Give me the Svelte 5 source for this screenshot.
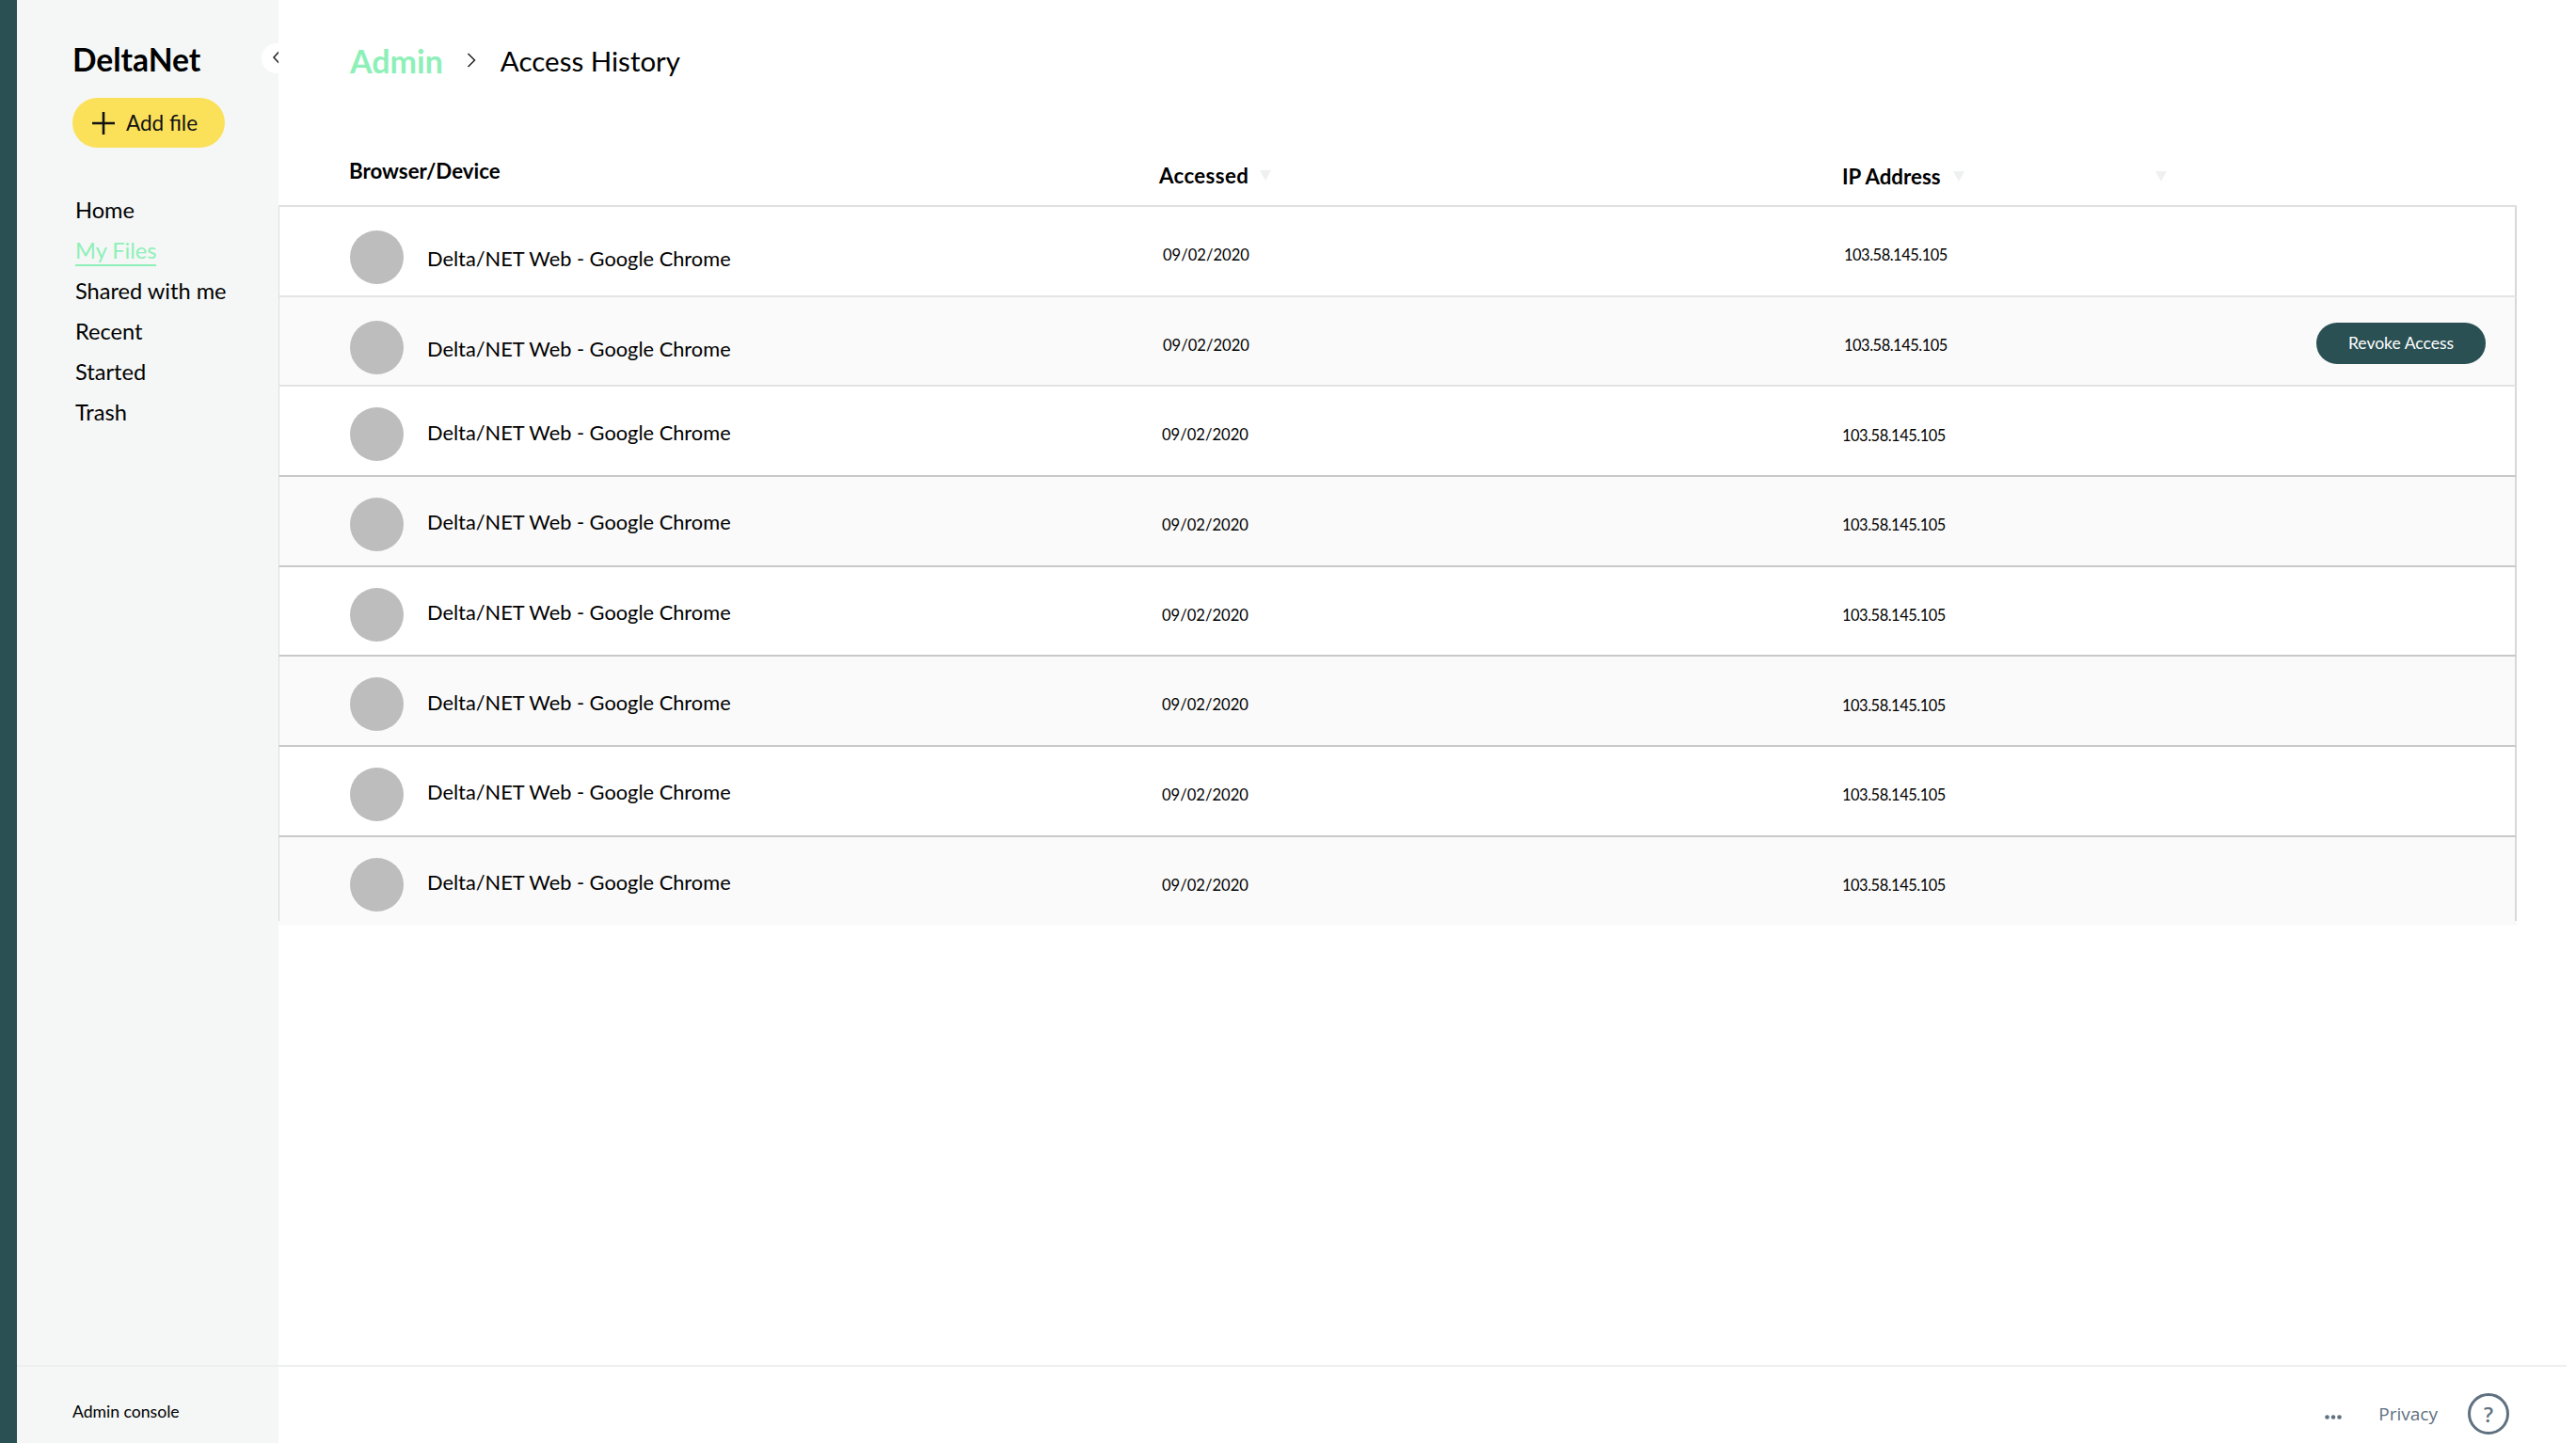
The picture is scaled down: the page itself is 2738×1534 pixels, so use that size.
<script>
  const nav = ['Home', 'My Files', 'Shared with me', 'Recent', 'Started', 'Trash'];
  const rows = Array.from({ length: 8 }, (_, i) => ({
    name: 'Delta/NET Web - Google Chrome',
    accessed: '09/02/2020',
    ip: '103.58.145.105',
    lead: i < 2,
    alt: i % 2 === 1,
    revoke: i === 1
  }));
</script>

<div class="app">
  <div class="rail"></div>

  <aside class="sidebar">
    <div class="sidebar-top">
      <button class="collapse" aria-label="Collapse">
        <svg width="10" height="16" viewBox="0 0 10 16"><path d="M8 1.5 2 8l6 6.5" fill="none" stroke="#222" stroke-width="1.5" /></svg>
      </button>
      <div class="brand">DeltaNet</div>
      <button class="add">
        <svg width="26" height="26" viewBox="0 0 26 26"><path d="M13 1v24M1 13h24" stroke="#111" stroke-width="2.6" /></svg>
        Add file
      </button>
      <nav>
        {#each nav as item}
          <div class="nav-item"><a class:active={item === 'My Files'} href="#/">{item}</a></div>
        {/each}
      </nav>
    </div>
    <div class="sidebar-foot">Admin console</div>
  </aside>

  <main>
    <div class="content">
      <header class="crumbs">
        <span class="crumb-root">Admin</span>
        <svg width="12" height="18" viewBox="0 0 12 18"><path d="M2.5 2 9.5 9l-7 7" fill="none" stroke="#222" stroke-width="1.5" /></svg>
        <span class="crumb-page">Access History</span>
      </header>

      <div class="table">
        <div class="head">
          <div class="th th-device">Browser/Device</div>
          <div class="th th-accessed">Accessed<i class="sort"></i></div>
          <div class="th th-ip">IP Address<i class="sort"></i><i class="sort last"></i></div>
        </div>
        {#each rows as row}
          <div class="row" class:lead={row.lead} class:alt={row.alt}>
            <div class="device">
              <span class="avatar"></span>
              <span class="name">{row.name}</span>
            </div>
            <div class="date">{row.accessed}</div>
            <div class="ip">{row.ip}</div>
            <div class="actions">
              {#if row.revoke}<button class="revoke">Revoke Access</button>{/if}
            </div>
          </div>
        {/each}
      </div>
    </div>

    <footer>
      <svg class="dots" width="18" height="5" viewBox="0 0 18 5" fill="#5f7080"><circle cx="2.5" cy="2.5" r="2.3" /><circle cx="9" cy="2.5" r="2.3" /><circle cx="15.5" cy="2.5" r="2.3" /></svg>
      <span class="privacy">Privacy</span>
      <span class="help">?</span>
    </footer>
  </main>
</div>

<style>
  :global(body) {
    margin: 0;
    background: #fff;
  }

  .app {
    display: flex;
    width: 2738px;
    height: 1534px;
    overflow: hidden;
    color: #000;
    font-family: Lato, 'Liberation Sans', sans-serif;
  }

  .rail {
    flex: 0 0 18px;
    background: #2a5053;
  }

  .sidebar {
    flex: 0 0 278px;
    display: flex;
    flex-direction: column;
    background: #f5f7f6;
  }

  .sidebar-top {
    flex: 1;
    position: relative;
    padding: 41px 0 0 59px;
  }

  .collapse {
    position: absolute;
    top: 46px;
    left: 260px;
    width: 32px;
    height: 32px;
    padding: 0 0 2px 2px;
    border: 0;
    border-radius: 50%;
    background: #fff;
    clip-path: inset(0 14px 0 0);
    display: flex;
    align-items: center;
    justify-content: center;
  }

  .collapse svg {
    margin-right: 2px;
  }

  .brand {
    font-size: 33.6px;
    line-height: 44px;
    font-weight: 700;
  }

  .add {
    display: flex;
    align-items: center;
    gap: 11px;
    width: 162px;
    height: 53px;
    margin-top: 19px;
    padding: 0 0 0 20px;
    border: 0;
    border-radius: 27px;
    background: #fbe15a;
    color: #111;
    font: inherit;
    font-size: 22.5px;
    white-space: nowrap;
  }

  nav {
    margin-top: 45px;
    padding-left: 3px;
  }

  .nav-item {
    height: 43px;
    line-height: 43px;
    font-size: 23.6px;
  }

  .nav-item a {
    color: inherit;
    text-decoration: none;
  }

  .nav-item a.active {
    color: #8ef0b8;
    border-bottom: 2px solid #8ef0b8;
    padding-bottom: 1px;
  }

  .sidebar-foot {
    height: 83px;
    box-sizing: border-box;
    border-top: 2px solid #eef0ef;
    padding: 37px 0 0 59px;
    font-size: 17.6px;
    line-height: 22px;
  }

  main {
    flex: 1;
    display: flex;
    flex-direction: column;
    min-width: 0;
  }

  .content {
    flex: 1;
    padding-right: 63px;
  }

  .crumbs {
    display: flex;
    align-items: center;
    height: 128px;
    padding-left: 76px;
  }

  .crumb-root {
    font-size: 34px;
    color: #8ef0b8;
    font-weight: 700;
  }

  .crumbs svg {
    margin: 0 25px 0 24px;
  }

  .crumb-page {
    font-size: 29.5px;
  }

  .head {
    position: relative;
    height: 92px;
    border-bottom: 2px solid #e0e0e0;
    box-sizing: border-box;
  }

  .th {
    position: absolute;
    font-size: 22.3px;
    font-weight: 700;
    line-height: 26px;
    white-space: nowrap;
  }

  .th-device {
    left: 75px;
    top: 41px;
  }

  .th-accessed {
    left: 936px;
    top: 46px;
    letter-spacing: 0.35px;
  }

  .th-ip {
    left: 1662px;
    top: 47px;
  }

  .sort {
    position: absolute;
    top: 7px;
    left: 107px;
    width: 0;
    height: 0;
    border-left: 6px solid transparent;
    border-right: 6px solid transparent;
    border-top: 11px solid #eef1f0;
  }

  .th-ip .sort {
    left: 118px;
  }

  .th-ip .sort.last {
    left: 333px;
  }

  .row {
    display: grid;
    grid-template-columns: 863px 723px 1fr 212px;
    align-items: center;
    box-sizing: border-box;
    height: 95.7px;
    padding: 8px 31px 0 75px;
    border-left: 1px solid #ddd;
    border-right: 2px solid #d8d8d8;
    border-bottom: 2px solid #c9c9c9;
    background: #fff;
  }

  .row.lead {
    border-bottom-color: #e4e4e4;
  }

  .row.alt {
    background: #fafafa;
  }

  .row:last-child {
    height: 94px;
    border-bottom: 0;
    border-image: linear-gradient(#d8d8d8 88px, #fafafa 88px) 1;
  }

  .device {
    display: flex;
    align-items: center;
    gap: 25px;
    margin-top: -1px;
  }

  .row.lead .device {
    margin-top: 5px;
  }

  .avatar {
    flex: 0 0 57px;
    height: 57px;
    border-radius: 50%;
    background: #bdbdbd;
  }

  .name {
    font-size: 21.8px;
    margin-top: -5px;
    white-space: nowrap;
  }

  .row.lead .name {
    margin-top: 3px;
  }

  .date {
    font-size: 16.6px;
    white-space: nowrap;
  }

  .ip {
    font-size: 16.4px;
    letter-spacing: -0.45px;
    white-space: nowrap;
  }

  .row.lead .date {
    margin-left: 1px;
  }

  .row.lead .ip {
    margin-left: 2px;
  }

  .actions {
    grid-column: 4;
    display: flex;
    justify-content: flex-end;
  }

  .revoke {
    width: 180px;
    height: 44px;
    margin-top: -4px;
    padding: 0;
    border: 0;
    border-radius: 22px;
    background: #2a5053;
    color: #fff;
    font: inherit;
    font-size: 17.5px;
  }

  footer {
    display: flex;
    align-items: center;
    height: 83px;
    box-sizing: border-box;
    margin-right: 10px;
    padding: 18px 61px 0 0;
    border-top: 2px solid #eef0ef;
    justify-content: flex-end;
    color: #5f7080;
    font-family: 'Open Sans', sans-serif;
  }

  .dots {
    margin: 7px 39px 0 0;
  }

  .privacy {
    font-size: 19px;
    margin-right: 32px;
  }

  .help {
    width: 44px;
    height: 44px;
    box-sizing: border-box;
    border: 3px solid #5f7080;
    border-radius: 50%;
    display: flex;
    align-items: center;
    justify-content: center;
    font-size: 22px;
    font-weight: 600;
  }
</style>
